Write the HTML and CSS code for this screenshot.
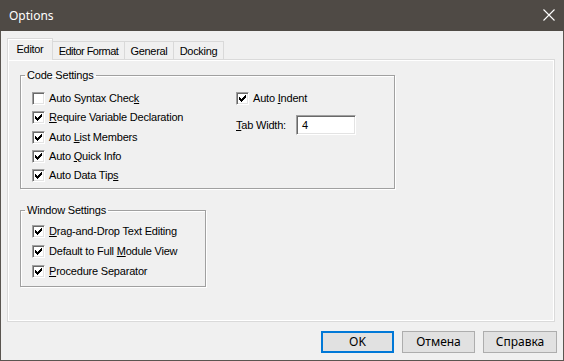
FILE: index.html
```html
<!DOCTYPE html>
<html>
<head>
<meta charset="utf-8">
<title>Options</title>
<link rel="stylesheet" href="styles.css">
</head>
<body>
<div class="window">
  <div class="titlebar">
    <span class="title">Options</span>
    <svg class="close" width="12" height="12" viewBox="0 0 12 12"><path d="M0.5 0.5L11.5 11.5M11.5 0.5L0.5 11.5" stroke="#fff" stroke-width="1.1" fill="none"/></svg>
  </div>
  <div class="content">
    <div class="tabs">
      <div class="tab active">Editor</div>
      <div class="tab tab-format">Editor Format</div>
      <div class="tab tab-general">General</div>
      <div class="tab tab-docking">Docking</div>
    </div>
    <div class="panel">
      <fieldset class="group code-settings">
        <legend>Code Settings</legend>
        <div class="cols">
          <div class="col left">
            <label class="check"><span class="box"></span><span>Auto Syntax Chec<u>k</u></span></label>
            <label class="check"><span class="box on"><svg viewBox="0 0 11 11"><path d="M2 4h1v3h-1zM3 5h1v3h-1zM4 6h1v3h-1zM5 5h1v3h-1zM6 4h1v3h-1zM7 3h1v3h-1zM8 2h1v3h-1z"/></svg></span><span><u>R</u>equire Variable Declaration</span></label>
            <label class="check"><span class="box on"><svg viewBox="0 0 11 11"><path d="M2 4h1v3h-1zM3 5h1v3h-1zM4 6h1v3h-1zM5 5h1v3h-1zM6 4h1v3h-1zM7 3h1v3h-1zM8 2h1v3h-1z"/></svg></span><span>Auto <u>L</u>ist Members</span></label>
            <label class="check"><span class="box on"><svg viewBox="0 0 11 11"><path d="M2 4h1v3h-1zM3 5h1v3h-1zM4 6h1v3h-1zM5 5h1v3h-1zM6 4h1v3h-1zM7 3h1v3h-1zM8 2h1v3h-1z"/></svg></span><span>Auto <u>Q</u>uick Info</span></label>
            <label class="check"><span class="box on"><svg viewBox="0 0 11 11"><path d="M2 4h1v3h-1zM3 5h1v3h-1zM4 6h1v3h-1zM5 5h1v3h-1zM6 4h1v3h-1zM7 3h1v3h-1zM8 2h1v3h-1z"/></svg></span><span>Auto Data Tip<u>s</u></span></label>
          </div>
          <div class="col right">
            <label class="check"><span class="box on"><svg viewBox="0 0 11 11"><path d="M2 4h1v3h-1zM3 5h1v3h-1zM4 6h1v3h-1zM5 5h1v3h-1zM6 4h1v3h-1zM7 3h1v3h-1zM8 2h1v3h-1z"/></svg></span><span>Auto <u>I</u>ndent</span></label>
            <div class="field">
              <span class="field-label"><u>T</u>ab Width:</span>
              <span class="textbox">4</span>
            </div>
          </div>
        </div>
      </fieldset>
      <fieldset class="group window-settings">
        <legend>Window Settings</legend>
        <div class="col wcol">
          <label class="check"><span class="box on"><svg viewBox="0 0 11 11"><path d="M2 4h1v3h-1zM3 5h1v3h-1zM4 6h1v3h-1zM5 5h1v3h-1zM6 4h1v3h-1zM7 3h1v3h-1zM8 2h1v3h-1z"/></svg></span><span><u>D</u>rag-and-Drop Text Editing</span></label>
          <label class="check"><span class="box on"><svg viewBox="0 0 11 11"><path d="M2 4h1v3h-1zM3 5h1v3h-1zM4 6h1v3h-1zM5 5h1v3h-1zM6 4h1v3h-1zM7 3h1v3h-1zM8 2h1v3h-1z"/></svg></span><span>Default to Full <u>M</u>odule View</span></label>
          <label class="check"><span class="box on"><svg viewBox="0 0 11 11"><path d="M2 4h1v3h-1zM3 5h1v3h-1zM4 6h1v3h-1zM5 5h1v3h-1zM6 4h1v3h-1zM7 3h1v3h-1zM8 2h1v3h-1z"/></svg></span><span><u>P</u>rocedure Separator</span></label>
        </div>
      </fieldset>
    </div>
    <div class="buttons">
      <button class="btn default">OK</button>
      <button class="btn">Отмена</button>
      <button class="btn help">Справка</button>
    </div>
  </div>
</div>
</body>
</html>
```
FILE: styles.css
```css
* { box-sizing: border-box; }
html, body { margin: 0; padding: 0; }
body {
  width: 564px;
  height: 361px;
  overflow: hidden;
  background: #f0f0f0;
  font-family: "Liberation Sans", Arial, sans-serif;
  font-size: 11px;
  color: #000;
}
.window {
  width: 564px;
  height: 361px;
  display: flex;
  flex-direction: column;
}
.titlebar {
  height: 31px;
  flex: 0 0 31px;
  background: #4f4a45;
  display: flex;
  align-items: center;
  justify-content: space-between;
  padding: 0 9px 0 9px;
  color: #fff;
  font-family: "Noto Sans", "Open Sans", sans-serif;
  font-size: 12px;
}
.title { margin-top: -1px; }
.close { display: block; margin-top: -1px; }
.content {
  flex: 1;
  display: flex;
  flex-direction: column;
  background: #f0f0f0;
  border: 1px solid #5a5550;
  border-top: 0;
  padding: 7px 6px 7px 6px;
}
.tabs {
  display: flex;
  align-items: flex-end;
  height: 21px;
  flex: 0 0 21px;
}
.tab {
  height: 18px;
  border: 1px solid #d9d9d9;
  border-bottom: 0;
  margin-left: -1px;
  display: flex;
  align-items: center;
  justify-content: center;
  background: #f0f0f0;
  letter-spacing: -0.3px;
  white-space: nowrap;
}
.tab-format { width: 73px; letter-spacing: -0.55px; }
.tab-general { width: 50px; letter-spacing: -0.3px; }
.tab-docking { width: 51px; }
.tab.active {
  margin-left: 0;
  width: 46px;
  height: 22px;
  margin-bottom: -1px;
  padding-bottom: 2px;
  border-color: #dadada;
  box-shadow: inset 1px 1px 0 #fff;
  position: relative;
  z-index: 1;
}
.panel {
  height: 263px;
  flex: 0 0 263px;
  margin-right: 2px;
  border: 1px solid #dadada;
  box-shadow: inset 1px 1px 0 #fff, inset -1px -1px 0 #fff;
  padding: 9px 0 0 12px;
  display: flex;
  flex-direction: column;
  align-items: flex-start;
}
.group {
  margin: 0;
  border: 1px solid #a0a0a0;
  box-shadow: 1px 1px 0 #fff, inset 1px 1px 0 #fff;
  min-width: 0;
}
.group legend {
  padding: 0 2px;
  margin-left: -7px;
  line-height: 13px;
  letter-spacing: -0.2px;
}
.code-settings {
  width: 375px;
  padding: 10px 0 6px 11px;
}
.window-settings {
  width: 186px;
  margin-top: 15px;
  padding: 8px 0 8px 11px;
}
.cols { display: flex; }
.col {
  display: flex;
  flex-direction: column;
  gap: 6.35px;
}
.col.left { width: 204px; }
.col.right { gap: 10px; }
.wcol { gap: 6.7px; }
.check {
  display: flex;
  align-items: center;
  height: 13px;
  gap: 4px;
  white-space: nowrap;
  letter-spacing: -0.2px;
  line-height: 13px;
}
.box {
  width: 13px;
  height: 13px;
  flex: 0 0 13px;
  background: #fff;
  border: 1px solid;
  border-color: #a0a0a0 #fff #fff #a0a0a0;
  box-shadow: inset 1px 1px 0 #696969, inset -1px -1px 0 #e3e3e3;
  display: flex;
}
.box svg { width: 11px; height: 11px; display: block; shape-rendering: crispEdges; }
.box svg path { fill: #000; }
.field {
  display: flex;
  align-items: center;
  height: 20px;
}
.field-label {
  width: 60px;
  letter-spacing: -0.2px;
}
.textbox {
  width: 60px;
  height: 20px;
  background: #fff;
  border: 1px solid;
  border-color: #a0a0a0 #fff #fff #a0a0a0;
  box-shadow: inset 1px 1px 0 #696969, inset -1px -1px 0 #e3e3e3;
  padding: 0 0 0 5px;
  line-height: 18px;
}
.buttons {
  display: flex;
  justify-content: flex-end;
  gap: 8px;
  margin-top: 9px;
}
.btn {
  width: 73px;
  height: 22px;
  margin: 0;
  padding: 0;
  background: #e1e1e1;
  border: 1px solid #adadad;
  font-family: "Noto Sans", "Open Sans", sans-serif;
  font-size: 12px;
  color: #000;
  line-height: 18px;
}
.btn.default { border: 2px solid #0078d7; }
.btn.help { width: 74px; }
u { text-decoration: underline; text-underline-offset: 1px; }
```
